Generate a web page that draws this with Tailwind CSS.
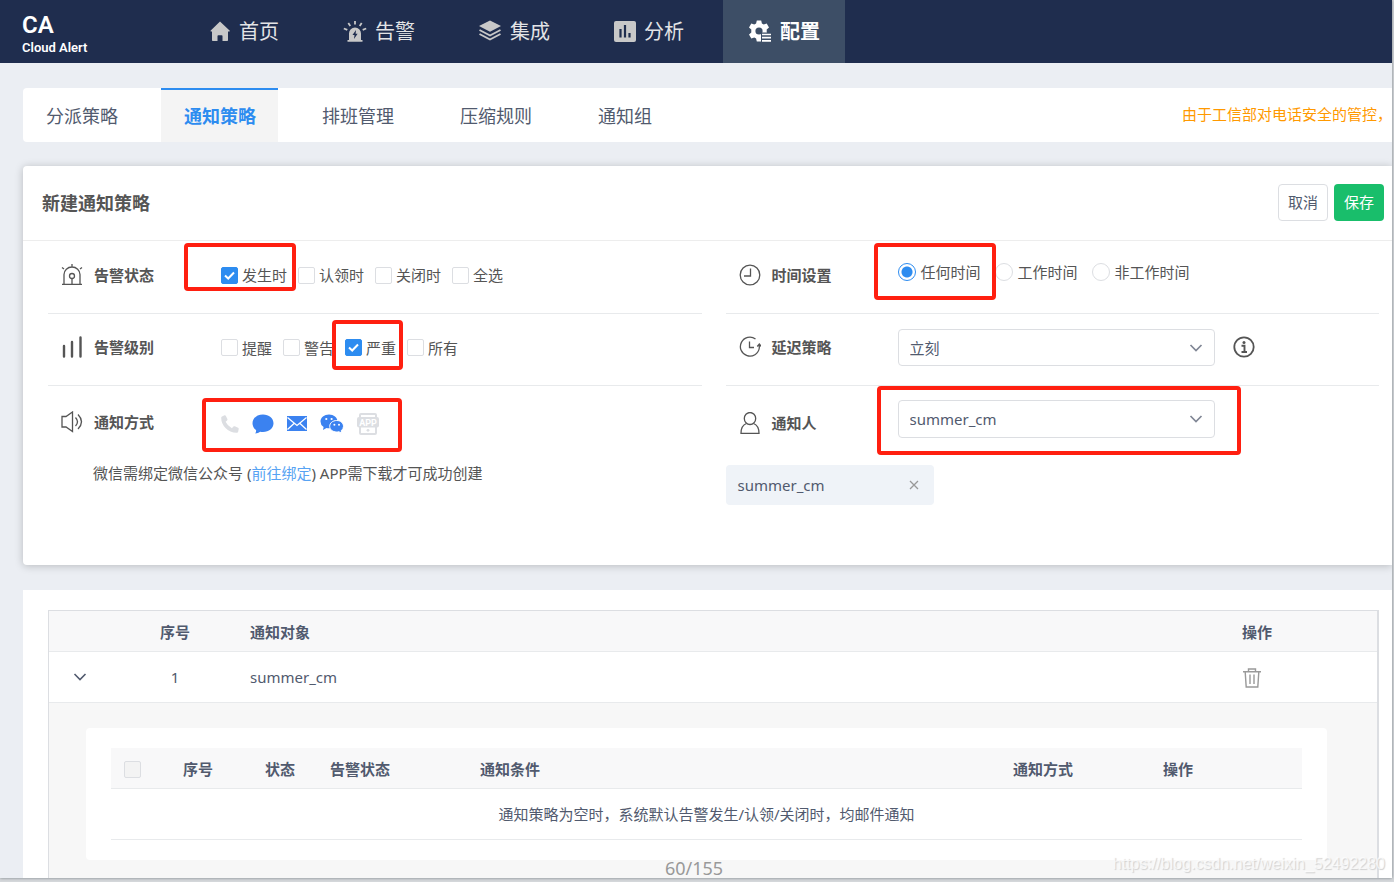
<!DOCTYPE html>
<html lang="zh-CN">
<head>
<meta charset="utf-8">
<title>Cloud Alert - 通知策略</title>
<script src="https://cdn.jsdelivr.net/npm/@tailwindcss/browser@4"></script>
</head>
<body class="relative h-screen overflow-hidden bg-[#d5d8db] pr-0.5 pb-1 font-['Noto_Sans','Noto_Sans_CJK_SC',sans-serif] text-[15px] leading-6 text-[#515a6e]">
<div class="relative h-full overflow-hidden bg-[#ebeef3] shadow-[0_0_3px_#777f84]">

  <header class="flex h-[63px] items-stretch bg-[#1f2d4e] text-white">
    <div class="flex w-[183px] flex-col pt-3 pl-[22px] font-['Roboto',sans-serif] font-semibold">
      <span class="text-[24px] leading-[26px]">CA</span>
      <span class="text-[13px] leading-5">Cloud Alert</span>
    </div>
    <nav class="flex gap-[13px] text-[20px] text-[#e3e4e6]">
      <a href="#" class="flex w-[122px] items-center justify-center gap-2">
        <svg class="size-[22px]" viewBox="0 0 22 22" fill="#c8c8c8"><path d="M11 .500 20.800 9.700q.3.800-.6.800H19v8.700q0 .8-.8.800h-4.700v-5q0-.8-.8-.8H9.300q-.8 0-.8.800v5H3.800q-.8 0-.8-.8v-8.700h-.9q-.9 0-.6-.8z"/></svg>
        <span>首页</span>
      </a>
      <a href="#" class="flex w-[122px] items-center justify-center gap-2">
        <svg class="size-6" viewBox="0 0 24 24" fill="#c8c8c8"><path d="M6 20v-6.500a6 6 0 0 1 12 0V20h1.500v1.800H4.500V20z"/><path d="M12 1v3.500M5.300 3l2 3M18.700 3l-2 3M.8 8.500l3.500 1.400M23.200 8.500l-3.500 1.400" stroke="#c8c8c8" stroke-width="1.800"/><path d="M13 10l-3.500 5h2L11 19l3.600-5.300h-2z" fill="#1f2d4e"/></svg>
        <span>告警</span>
      </a>
      <a href="#" class="flex w-[122px] items-center justify-center gap-2">
        <svg class="size-6" viewBox="0 0 24 24" fill="#c8c8c8"><path d="M12 .500 23 6 12 11.800 1 6z"/><path d="M1.500 10 12 15.500 22.500 10M1.500 14 12 19.500 22.500 14" fill="none" stroke="#c8c8c8" stroke-width="1.900"/></svg>
        <span>集成</span>
      </a>
      <a href="#" class="flex w-[122px] items-center justify-center gap-2">
        <svg class="size-[22px]" viewBox="0 0 22 22"><rect width="22" height="21" rx="2" fill="#c8c8c8"/><path d="M6.500 8v8.500M11 4v12.500M15.500 12v4.500" stroke="#1f2d4e" stroke-width="2.200"/></svg>
        <span>分析</span>
      </a>
      <a href="#" class="flex w-[122px] items-center justify-center gap-2 bg-[#3d4e66] font-bold text-white">
        <svg class="size-6" viewBox="0 0 24 24" fill="#fff"><path d="M8.800.500h4.400l.7 3 1.800 1 3-1 2.300 3.900-2.300 2.100v2.900l2.300 2.100-2.300 3.900-3-1-1.800 1-.7 3H8.800l-.7-3-1.800-1-3 1L1 14.500l2.300-2.100V9.500L1 7.400l2.300-3.900 3 1 1.800-1z"/><circle cx="11" cy="11" r="3.600" fill="#3d4e66"/><path d="M13 12.500h11V23H13z" fill="#3d4e66"/><path d="M14 14.500h9M14 17.700h9M14 20.900h9" stroke="#fff" stroke-width="1.700"/></svg>
        <span>配置</span>
      </a>
    </nav>
  </header>

  <main class="flex flex-col pt-[25px] pl-[23px]">
    <div class="flex h-[54px] items-center justify-between rounded-l bg-white">
      <nav class="flex h-full gap-[21px] text-[18px]">
        <a href="#" class="flex w-[117px] items-center border-t-2 border-transparent pl-[23px]">分派策略</a>
        <a href="#" class="flex w-[117px] items-center border-t-2 border-[#2d8cf0] bg-[#f4f4f4] pl-[23px] font-bold text-[#2d8cf0]">通知策略</a>
        <a href="#" class="flex w-[117px] items-center border-t-2 border-transparent pl-[23px]">排班管理</a>
        <a href="#" class="flex w-[117px] items-center border-t-2 border-transparent pl-[23px]">压缩规则</a>
        <a href="#" class="flex w-[117px] items-center border-t-2 border-transparent pl-[23px]">通知组</a>
      </nav>
      <p class="pb-0.5 whitespace-nowrap text-[#ff9900]">由于工信部对电话安全的管控，</p>
    </div>

    <section class="mt-6 min-h-[399px] rounded-l bg-white shadow-[0_1px_8px_rgba(0,0,0,0.22)]">
      <div class="flex h-[75px] items-center justify-between border-b border-[#ededed] pr-2 pl-[19px]">
        <h1 class="text-[18px] font-bold text-[#555]">新建通知策略</h1>
        <div class="flex gap-1.5 pb-0.5">
          <button class="h-[37px] w-[50px] rounded border border-[#dcdee2] bg-white">取消</button>
          <button class="h-[37px] w-[50px] rounded bg-[#19be6b] text-white">保存</button>
        </div>
      </div>

      <form class="grid grid-cols-2 gap-x-6 pr-[13px] pl-[25px] text-[#555]">
        <div>
          <fieldset class="relative flex h-[73px] items-center border-b border-[#e8eaec] pb-1">
            <div class="flex w-[173px] items-center gap-[11px] pl-[13px]">
              <svg class="size-[22px]" viewBox="0 0 22 22" fill="none" stroke="#555" stroke-width="1.300"><path d="M3 20v-9.500a8 7.500 0 0 1 16 0V20M1 20.400h20M11 0v2.500M1 3.500l2 1.500M21 3.500l-2 1.500M11 14.500V20"/><circle cx="11" cy="12" r="2.500"/></svg>
              <span class="font-bold">告警状态</span>
            </div>
            <div class="flex gap-[11px]">
              <label class="flex items-center gap-1"><span class="relative flex"><input type="checkbox" checked class="size-[17px] appearance-none rounded-xs border border-[#dcdee2] bg-white checked:border-[#2d8cf0] checked:bg-[#2d8cf0]"><svg class="pointer-events-none absolute inset-0 size-[17px]" viewBox="0 0 17 17" fill="none" stroke="#fff" stroke-width="2"><path d="M4 8.500 7.200 11.500 13 5.500"/></svg></span>发生时</label>
              <label class="flex items-center gap-1"><input type="checkbox" class="size-[17px] appearance-none rounded-xs border border-[#dcdee2] bg-white">认领时</label>
              <label class="flex items-center gap-1"><input type="checkbox" class="size-[17px] appearance-none rounded-xs border border-[#dcdee2] bg-white">关闭时</label>
              <label class="flex items-center gap-1"><input type="checkbox" class="size-[17px] appearance-none rounded-xs border border-[#dcdee2] bg-white">全选</label>
            </div>
            <div class="pointer-events-none absolute top-0.5 left-[136px] h-12 w-28 rounded border-4 border-[#ff1f10]"></div>
          </fieldset>

          <fieldset class="relative flex h-[72px] items-center border-b border-[#e8eaec] pb-1">
            <div class="flex w-[173px] items-center gap-[11px] pb-0.5 pl-[13px]">
              <svg class="size-[22px]" viewBox="0 0 22 22" fill="none" stroke="#555" stroke-width="2.400" stroke-linecap="round"><path d="M3 10v10.500M11 6v14.500M19.500 1.500v19"/></svg>
              <span class="font-bold">告警级别</span>
            </div>
            <div class="flex gap-[11px]">
              <label class="flex items-center gap-1"><input type="checkbox" class="size-[17px] appearance-none rounded-xs border border-[#dcdee2] bg-white">提醒</label>
              <label class="flex items-center gap-1"><input type="checkbox" class="size-[17px] appearance-none rounded-xs border border-[#dcdee2] bg-white">警告</label>
              <label class="flex items-center gap-1"><span class="relative flex"><input type="checkbox" checked class="size-[17px] appearance-none rounded-xs border border-[#dcdee2] bg-white checked:border-[#2d8cf0] checked:bg-[#2d8cf0]"><svg class="pointer-events-none absolute inset-0 size-[17px]" viewBox="0 0 17 17" fill="none" stroke="#fff" stroke-width="2"><path d="M4 8.500 7.200 11.500 13 5.500"/></svg></span>严重</label>
              <label class="flex items-center gap-1"><input type="checkbox" class="size-[17px] appearance-none rounded-xs border border-[#dcdee2] bg-white">所有</label>
            </div>
            <div class="pointer-events-none absolute top-1.5 left-[284px] h-[50px] w-[71px] rounded border-4 border-[#ff1f10]"></div>
          </fieldset>

          <fieldset class="relative flex h-[73px] items-center">
            <div class="flex w-[173px] items-center gap-[11px] pb-0.5 pl-[13px]">
              <svg class="size-[22px]" viewBox="0 0 22 22" fill="none" stroke="#555" stroke-width="1.300"><path d="M5 5.500H1v10.500h4l6.500 4.500V1zM14.500 6.500q4 4.300 0 8.500M17 3.500q7 7.200 0 14.500"/></svg>
              <span class="font-bold">通知方式</span>
            </div>
            <div class="flex items-center gap-[13px] pt-0.5">
              <button type="button" aria-label="电话"><svg class="size-[18px]" viewBox="0 0 18 18" fill="#dcdee2"><path d="M1 1.500 3.500.3q1-.3 1.400.6l1.500 3q.3.800-.3 1.500L4.600 6.700q2 4.200 6.300 6.600l1.500-1.700q.6-.6 1.400-.3l3.300 1.500q.8.400.6 1.300l-.6 2.800q-.2.800-1.200.8Q9 17.800 4.500 13 .2 8.500.2 2.700.2 1.900 1 1.500z"/></svg></button>
              <button type="button" aria-label="短信"><svg class="h-5 w-[22px]" viewBox="0 0 22 20" fill="#3b82f0"><path d="M11 .5c6 0 10.500 3.800 10.500 8.700S17 18 11 18q-1.500 0-2.800-.3Q6.200 19.400 3.300 19.600q.9-1.500.8-3.400Q.5 13.500.5 9.200C.5 4.300 5 .5 11 .5z"/></svg></button>
              <button type="button" aria-label="邮件"><svg class="h-[15px] w-5" viewBox="0 0 20 15"><rect width="20" height="15" fill="#3b82f0"/><path d="M.5 1.500 10 9.500 19.500 1.500M.5 13.500 7 7.500M19.500 13.500 13 7.500" fill="none" stroke="#fff" stroke-width="1.300"/></svg></button>
              <button type="button" aria-label="微信"><svg class="h-5 w-6" viewBox="0 0 24 20"><path d="M9 .5c4.700 0 8.500 3 8.500 6.900S13.700 14.300 9 14.300q-1.300 0-2.500-.3L3 16l.6-3Q.5 10.800.5 7.400C.5 3.500 4.300.5 9 .5z" fill="#3b82f0"/><path d="M16.700 6.500c4 0 6.800 2.600 6.800 5.800q0 2.700-2.300 4.500l.5 2.400-2.900-1.500q-1 .3-2.100.3c-4 0-7-2.500-7-5.700s3-5.800 7-5.800z" fill="#3b82f0" stroke="#fff"/><g fill="#fff"><circle cx="6.300" cy="5" r="1.100"/><circle cx="11.600" cy="5" r="1.100"/><circle cx="14.400" cy="10.700" r="1"/><circle cx="19" cy="10.700" r="1"/></g></svg></button>
              <button type="button" aria-label="APP"><svg class="size-[22px]" viewBox="0 0 22 22"><path d="M3 5V2q0-1 1-1h14q1 0 1 1v3M3 13v7q0 1 1 1h14q1 0 1-1v-7" fill="none" stroke="#dcdee2" stroke-width="2"/><rect y="4" width="22" height="10.500" rx="2" fill="#dcdee2"/><circle cx="11" cy="17.300" r="1.400" fill="#dcdee2"/><text x="11" y="12.500" text-anchor="middle" font-family="Roboto" font-size="9" font-weight="700" fill="#fff">APP</text></svg></button>
            </div>
            <div class="pointer-events-none absolute top-3 left-[154px] h-[54px] w-[200px] rounded border-4 border-[#ff1f10]"></div>
          </fieldset>
          <p class="pt-0.5 pl-[45px]">微信需绑定微信公众号 (<a href="#" class="text-[#57a3f3]">前往绑定</a>) APP需下载才可成功创建</p>
        </div>

        <div>
          <fieldset class="relative flex h-[73px] items-center border-b border-[#e8eaec] pb-1">
            <div class="flex w-[172px] items-center gap-[11px] pl-[13px]">
              <svg class="size-[22px]" viewBox="0 0 22 22" fill="none" stroke="#555" stroke-width="1.300"><circle cx="11" cy="11" r="9.800"/><path d="M11.500 4.500v7.500H5"/></svg>
              <span class="font-bold">时间设置</span>
            </div>
            <div class="flex gap-3.5 pb-1.5">
              <label class="flex items-center gap-[5px]"><input type="radio" name="time" checked class="size-[18px] appearance-none rounded-full border border-[#dcdee2] checked:border-[#2d8cf0] checked:bg-[radial-gradient(circle,#2d8cf0_5px,#ffffff_6px)]">任何时间</label>
              <label class="flex items-center gap-[5px]"><input type="radio" name="time" class="size-[18px] appearance-none rounded-full border border-[#dcdee2]">工作时间</label>
              <label class="flex items-center gap-[5px]"><input type="radio" name="time" class="size-[18px] appearance-none rounded-full border border-[#dcdee2]">非工作时间</label>
            </div>
            <div class="pointer-events-none absolute top-0.5 left-[148px] h-[57px] w-[122px] rounded border-4 border-[#ff1f10]"></div>
          </fieldset>

          <div class="relative flex h-[72px] items-center border-b border-[#e8eaec] pb-1">
            <div class="flex w-[172px] items-center gap-[11px] pb-0.5 pl-[13px]">
              <svg class="size-[22px]" viewBox="0 0 22 22" fill="none" stroke="#555" stroke-width="1.300"><path d="M16.500 3A9.500 9.500 0 1 0 20.300 12V8M18.300 10.500 20.300 8l2 2.500M10.500 5.500v6h4.500"/></svg>
              <label for="delay" class="font-bold">延迟策略</label>
            </div>
            <div class="relative flex w-[317px] items-center">
              <select id="delay" class="h-[37px] w-full appearance-none rounded border border-[#dcdee2] bg-white px-[11px] text-[#515a6e]"><option>立刻</option></select>
              <svg class="pointer-events-none absolute right-3 h-2 w-3.5" viewBox="0 0 14 8" fill="none" stroke="#808695" stroke-width="1.700"><path d="M1.500 1 7 6.500 12.500 1"/></svg>
            </div>
            <button type="button" aria-label="说明" class="ml-[17px] pb-0.5"><svg class="size-6" viewBox="0 0 24 24" fill="none" stroke="#555"><circle cx="12" cy="12" r="9.700" stroke-width="1.800"/><circle cx="12" cy="7.500" r="1.500" fill="#555" stroke="none"/><path d="M9.500 10.800H12.500V17M9.500 17h5.500" stroke-width="1.900"/></svg></button>
          </div>

          <div class="relative flex h-[73px] items-center">
            <div class="flex w-[172px] items-center gap-[11px] pl-[13px]">
              <svg class="size-[22px]" viewBox="0 0 22 22" fill="none" stroke="#555" stroke-width="1.300"><ellipse cx="11" cy="6.500" rx="5.700" ry="6"/><path d="M7.500 11.500Q2 13.500 2 21.300h18q0-7.800-5.500-9.800"/></svg>
              <label for="person" class="font-bold">通知人</label>
            </div>
            <div class="relative mb-2 flex w-[317px] items-center">
              <select id="person" class="h-[38px] w-full appearance-none rounded border border-[#dcdee2] bg-white px-[11px] text-[#515a6e]"><option>summer_cm</option></select>
              <svg class="pointer-events-none absolute right-3 h-2 w-3.5" viewBox="0 0 14 8" fill="none" stroke="#808695" stroke-width="1.700"><path d="M1.500 1 7 6.500 12.500 1"/></svg>
            </div>
            <div class="pointer-events-none absolute top-0 left-[151px] h-[69px] w-[364px] rounded border-4 border-[#ff1f10]"></div>
          </div>
          <div class="mt-1.5 flex h-10 w-[208px] items-center justify-between rounded bg-[#eff3f8] pr-3.5 pl-3 text-[#515a6e]">
            <span>summer_cm</span>
            <button type="button" aria-label="移除 summer_cm"><svg class="size-3" viewBox="0 0 12 12" stroke="#999" stroke-width="1.300"><path d="M2 2l8 8M10 2l-8 8"/></svg></button>
          </div>
        </div>
      </form>
    </section>

    <section class="mt-[25px] bg-white pt-5 pr-[13px] pb-5 pl-[25px]">
      <table class="w-full table-fixed border-separate border-spacing-0 border-t border-r-2 border-l border-[#dcdee2]">
        <thead>
          <tr class="h-[41px] bg-[#f8f8f9]">
            <th class="w-[62px] border-b border-[#e8eaec]"></th>
            <th class="w-[128px] border-b border-[#e8eaec] p-0 pt-0.5">序号</th>
            <th class="border-b border-[#e8eaec] p-0 pt-0.5 pl-[11px] text-left">通知对象</th>
            <th class="w-[135px] border-b border-[#e8eaec] p-0 pt-0.5 text-left">操作</th>
          </tr>
        </thead>
        <tbody>
          <tr class="h-[51px]">
            <td class="border-b border-[#e8eaec] p-0"><button class="flex w-full justify-center" aria-label="收起"><svg class="h-2 w-3.5" viewBox="0 0 14 8" fill="none" stroke="#515a6e" stroke-width="1.600"><path d="M1.500 1 7 6.500 12.500 1"/></svg></button></td>
            <td class="border-b border-[#e8eaec] p-0 text-center">1</td>
            <td class="border-b border-[#e8eaec] p-0 pl-[11px]">summer_cm</td>
            <td class="border-b border-[#e8eaec] p-0 pt-0.5"><button class="flex" aria-label="删除"><svg class="size-5" viewBox="0 0 20 20" fill="none" stroke="#999" stroke-width="1.400"><path d="M1 3.700h18M6.500 3.500V1h7v2.500M3.200 4l1 15h11.600l1-15M8 6.500v9.500M12 6.500v9.500"/></svg></button></td>
          </tr>
          <tr>
            <td colspan="4" class="bg-[#f7f7f7] pt-[25px] pr-[50px] pb-[50px] pl-[37px]">
              <div class="rounded bg-white px-[25px] py-5">
                <table class="w-full table-fixed border-separate border-spacing-0">
                  <thead>
                    <tr class="h-[41px] bg-[#f8f8f9]">
                      <th class="w-[43px] border-b border-[#e8eaec] p-0 pt-0.5"><input type="checkbox" disabled aria-label="全选" class="mx-auto block size-[17px] appearance-none rounded-xs border border-[#dcdee2] bg-[#f3f3f3]"></th>
                      <th class="w-[88px] border-b border-[#e8eaec] p-0 pt-0.5">序号</th>
                      <th class="w-[76px] border-b border-[#e8eaec] p-0 pt-0.5">状态</th>
                      <th class="w-[150px] border-b border-[#e8eaec] p-0 pt-0.5 pl-3 text-left">告警状态</th>
                      <th class="border-b border-[#e8eaec] p-0 pt-0.5 pl-3 text-left">通知条件</th>
                      <th class="w-[150px] border-b border-[#e8eaec] p-0 pt-0.5 pl-[11px] text-left">通知方式</th>
                      <th class="w-[150px] border-b border-[#e8eaec] p-0 pt-0.5 pl-[11px] text-left">操作</th>
                    </tr>
                  </thead>
                  <tbody>
                    <tr class="h-[51px]"><td colspan="7" class="border-b border-[#e8eaec] p-0 text-center">通知策略为空时，系统默认告警发生/认领/关闭时，均邮件通知</td></tr>
                  </tbody>
                </table>
              </div>
            </td>
          </tr>
        </tbody>
      </table>
    </section>
  </main>

</div>
<p class="absolute inset-x-0 bottom-0.5 pr-1.5 text-center text-[18px] leading-6 text-[#999]">60/155</p>
<p class="absolute right-[9px] bottom-2 font-['Liberation_Sans',sans-serif] text-[16px] leading-5 text-white/70 [text-shadow:1px_1px_1px_#d0d0d0]">https://blog.csdn.net/weixin_52492280</p>
</body>
</html>
